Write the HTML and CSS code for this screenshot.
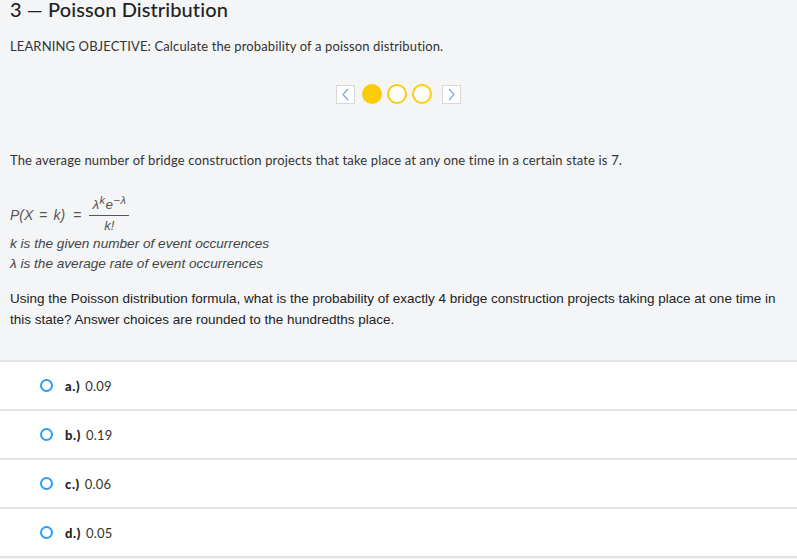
FILE: index.html
```html
<!DOCTYPE html>
<html>
<head>
<meta charset="utf-8">
<link rel="stylesheet" href="styles.css">
</head>
<body>
<div class="page">
  <h1 class="title">3 — Poisson Distribution</h1>
  <p class="objective">LEARNING OBJECTIVE: Calculate the probability of a poisson distribution.</p>
  <div class="pager">
    <span class="nav prev"><svg width="9" height="13" viewBox="0 0 9 13"><path d="M7 1 L2 6.5 L7 12" fill="none" stroke="#7aa7e6" stroke-width="1.2"/></svg></span>
    <span class="dot filled"></span>
    <span class="dot"></span>
    <span class="dot"></span>
    <span class="nav next"><svg width="9" height="13" viewBox="0 0 9 13"><path d="M2 1 L7 6.5 L2 12" fill="none" stroke="#7aa7e6" stroke-width="1.2"/></svg></span>
  </div>
  <p class="intro">The average number of bridge construction projects that take place at any one time in a certain state is 7.</p>
  <div class="formula">
    <span class="lhs">P(X<span class="eq">=</span>k)</span>
    <span class="equals">=</span>
    <span class="frac">
      <span class="num">λ<sup>k</sup>e<sup>−λ</sup></span>
      <span class="den">k!</span>
    </span>
  </div>
  <p class="note">k is the given number of event occurrences</p>
  <p class="note">λ is the average rate of event occurrences</p>
  <p class="question">Using the Poisson distribution formula, what is the probability of exactly 4 bridge construction projects taking place at one time in this state? Answer choices are rounded to the hundredths place.</p>
</div>
<ul class="choices">
  <li class="choice"><span class="radio"></span><b class="letter">a.)</b><span class="val">0.09</span></li>
  <li class="choice"><span class="radio"></span><b class="letter">b.)</b><span class="val">0.19</span></li>
  <li class="choice"><span class="radio"></span><b class="letter">c.)</b><span class="val">0.06</span></li>
  <li class="choice"><span class="radio"></span><b class="letter">d.)</b><span class="val">0.05</span></li>
</ul>
</body>
</html>
```
FILE: styles.css
```css
html, body {
  margin: 0;
  padding: 0;
  background: #f4f5f7;
  color: #333;
  font-family: Lato, "Liberation Sans", sans-serif;
}
.page {
  padding: 0 10px;
}
.title {
  margin: 0;
  padding-top: 0;
  font-size: 20px;
  font-weight: 500;
  color: #222;
  line-height: 19px;
  letter-spacing: 0.1px;
}
.objective {
  margin: 19px 0 0;
  font-size: 13px;
  letter-spacing: 0.13px;
  line-height: 16px;
  color: #333;
}
.pager {
  display: flex;
  justify-content: center;
  align-items: center;
  gap: 5px;
  margin-top: 29px;
  height: 22px;
}
.nav {
  width: 17px;
  height: 17px;
  border: 1px solid #d8d8d8;
  background: #fff;
  display: flex;
  align-items: center;
  justify-content: center;
}
.nav.prev {
  margin-right: 2px;
}
.nav.next {
  margin-left: 5px;
}
.dot {
  width: 16px;
  height: 16px;
  border: 2px solid #fccc0a;
  border-radius: 50%;
  background: #fff;
}
.dot.filled {
  background: #fccc0a;
}
.intro {
  margin: 47px 0 0;
  font-size: 13px;
  letter-spacing: 0.15px;
  line-height: 16px;
  color: #333;
}
.formula {
  margin-top: 28px;
  display: flex;
  align-items: center;
  font-family: "Liberation Sans", Arial, sans-serif;
  font-style: italic;
  color: #555;
  font-size: 14px;
  height: 38px;
}
.lhs .eq {
  font-style: normal;
  margin: 0 6px;
}
.equals {
  font-style: normal;
  margin: 0 8px 0 8px;
}
.frac {
  display: inline-flex;
  flex-direction: column;
  align-items: center;
}
.num {
  padding: 0 3px 2px;
  border-bottom: 1px solid #555;
  font-size: 13.5px;
  line-height: 16px;
  letter-spacing: 0.5px;
}
.num sup {
  font-size: 11px;
  vertical-align: 5px;
  line-height: 0;
}
.den {
  font-size: 13px;
  line-height: 16px;
  padding-top: 2px;
}
.note {
  margin: 0;
  font-family: "Liberation Sans", Arial, sans-serif;
  font-style: italic;
  color: #444;
  font-size: 13.6px;
  line-height: 20px;
}
.note:first-of-type {
  margin-top: 1px;
}
.question {
  margin: 14px 0 0;
  font-family: "Liberation Sans", sans-serif;
  font-size: 13.5px;
  line-height: 21px;
  color: #222;
  padding-bottom: 30px;
}
.choices {
  list-style: none;
  margin: 0;
  padding: 0;
  border-top: 2px solid #e3e3e3;
}
.choice {
  display: flex;
  align-items: center;
  height: 47px;
  background: #fff;
  border-bottom: 2px solid #e3e3e3;
  padding-left: 40px;
  font-size: 13px;
  letter-spacing: 0.2px;
}
.radio {
  width: 9px;
  height: 9px;
  border: 2px solid #2b9df4;
  border-radius: 50%;
  margin-right: 12px;
}
.letter {
  font-weight: 900;
  color: #222;
  margin-right: 5px;
  letter-spacing: 0.6px;
}
.val {
  color: #333;
}
```
